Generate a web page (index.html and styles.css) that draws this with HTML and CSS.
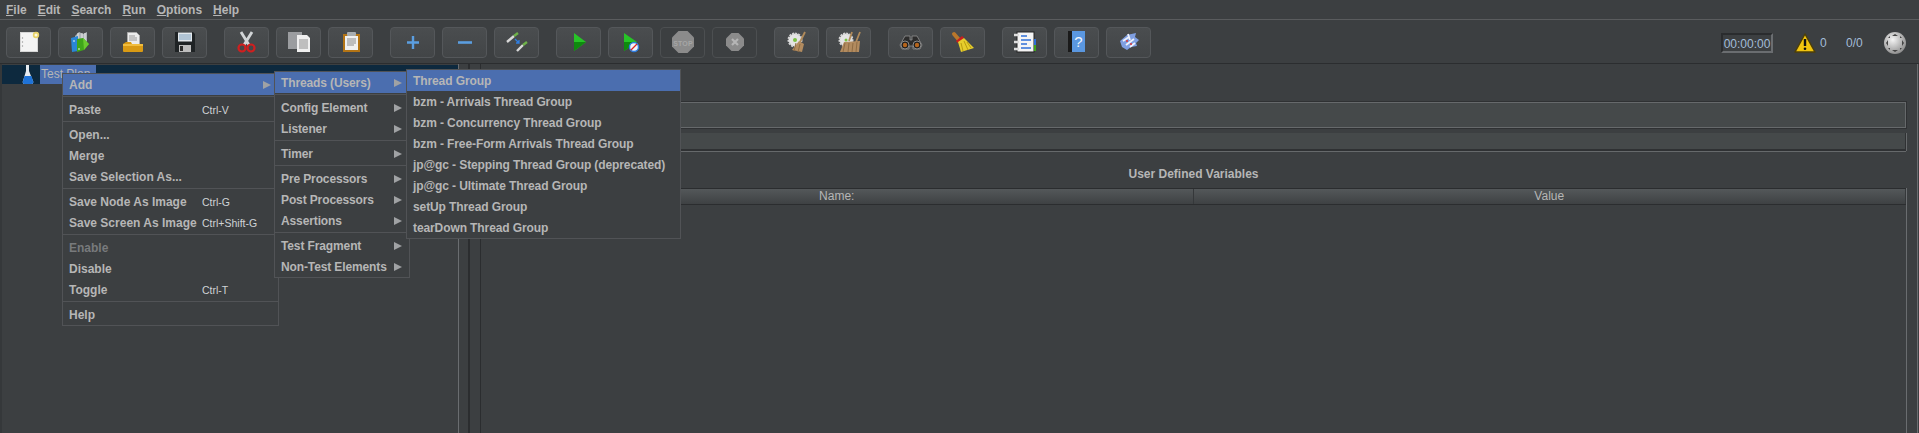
FILE: index.html
```html
<!DOCTYPE html>
<html lang="en">
<head>
<meta charset="utf-8">
<title>Apache JMeter</title>
<link rel="stylesheet" href="styles.css">
</head>
<body>
<div class="app">
  <nav class="menubar">
    <span class="mb-item"><u>F</u>ile</span>
    <span class="mb-item"><u>E</u>dit</span>
    <span class="mb-item"><u>S</u>earch</span>
    <span class="mb-item"><u>R</u>un</span>
    <span class="mb-item"><u>O</u>ptions</span>
    <span class="mb-item"><u>H</u>elp</span>
  </nav>

  <div class="toolbar">
    <div class="tool-group">
      <button class="tool"><svg viewBox="1 1 43 29"><rect x="14.5" y="5.5" width="17" height="19" fill="#f4f4f4" stroke="#d6d6d6"/><circle cx="16.5" cy="11" r=".7" fill="#999"/><circle cx="16.5" cy="15" r=".7" fill="#999"/><circle cx="16.5" cy="19" r=".7" fill="#999"/><circle cx="30" cy="8" r="3.2" fill="#e8d36a"/><circle cx="30" cy="8" r="1.500" fill="#fffbe0"/></svg></button>
      <button class="tool"><svg viewBox="1 1 43 29"><path d="M17 9l4-4 4 2 4-2v10H17z" fill="#aeb4b9"/><path d="M20 6v8M24 6v8M27 6v8" stroke="#e8e8e8"/><path d="M13 11l7-2v15l-6 1z" fill="#2a86d6"/><path d="M19 12l6-1 6 6-5 6-7 2z" fill="#3fa51a"/><path d="M25 11l6 6-5 6z" fill="#69c92f"/><circle cx="16" cy="14" r=".8" fill="#fff"/><circle cx="21" cy="22" r=".8" fill="#fff"/></svg></button>
      <button class="tool"><svg viewBox="1 1 43 29"><path d="M17.5 5.5h9l3 3v9h-12z" fill="#ececec" stroke="#aaa"/><path d="M19 9h6M19 11h8M19 13h8" stroke="#999"/><path d="M13 17l3-2h5l1 2h11v7a1 1 0 0 1-1 1H14a1 1 0 0 1-1-1z" fill="#d99a14"/><path d="M13 17h20v2H13z" fill="#f1bd3e"/></svg></button>
      <button class="tool"><svg viewBox="1 1 43 29"><path d="M13 5h18l2 2v18H13z" fill="#1f2325"/><rect x="16" y="5.500" width="14" height="9" fill="#e3e8ec"/><path d="M17 8h12M17 10h12M17 12h12" stroke="#7fa0bd"/><rect x="17" y="18" width="12" height="7" fill="#bdbdbd"/><rect x="18" y="19" width="3" height="5" fill="#2b2b2b"/></svg></button>
    </div>
    <div class="tool-group">
      <button class="tool"><svg viewBox="1 1 43 29"><path d="M17 5l8 13M28 5l-8 13" stroke="#d2d5d7" stroke-width="2.800" fill="none"/><circle cx="18" cy="21" r="3.500" fill="none" stroke="#cf1f1f" stroke-width="2.200"/><circle cx="27" cy="21" r="3.500" fill="none" stroke="#cf1f1f" stroke-width="2.200"/></svg></button>
      <button class="tool"><svg viewBox="1 1 43 29"><rect x="12" y="5" width="14" height="17" fill="#9b9da0"/><path d="M21 8h10l3 3v14H21z" fill="#efefef"/><path d="M23 13h9M23 15h9M23 17h9M23 19h9M23 21h9" stroke="#8d8d8d"/></svg></button>
      <button class="tool"><svg viewBox="1 1 43 29"><rect x="15" y="7" width="17" height="18" fill="#b37415"/><rect x="17" y="9" width="13" height="14" fill="#f0f0f0"/><rect x="19" y="5" width="9" height="4" rx="1" fill="#a8adb0"/><path d="M19 12h9M19 14h9M19 16h9M19 18h7" stroke="#8a8a8a"/></svg></button>
    </div>
    <div class="tool-group">
      <button class="tool"><svg viewBox="1 1 43 29"><path d="M23 9v13M17 15.500h12" stroke="#5b9ee0" stroke-width="2.400" fill="none"/></svg></button>
      <button class="tool"><svg viewBox="1 1 43 29"><path d="M16 15.500h14" stroke="#5b9ee0" stroke-width="2.600" fill="none"/></svg></button>
      <button class="tool"><svg viewBox="1 1 43 29"><path d="M13 15l7-6" stroke="#d8d8d8" stroke-width="2.400"/><path d="M20 9l4-3" stroke="#6fb24a" stroke-width="2.400"/><path d="M23 24l6-6" stroke="#d8d8d8" stroke-width="2.400"/><path d="M29 18l4-3" stroke="#6fb24a" stroke-width="2.400"/><path d="M21 12l4 4m0-3v3h-3" stroke="#2f7de0" stroke-width="1.300" fill="none"/></svg></button>
    </div>
    <div class="tool-group">
      <button class="tool"><svg viewBox="1 1 43 29"><path d="M18 6l12 9-12 9z" fill="#27c427"/><path d="M18 15h12l-12 9z" fill="#0e8a0e"/></svg></button>
      <button class="tool"><svg viewBox="1 1 43 29"><path d="M16 6l13 9-13 9z" fill="#27c427"/><path d="M16 15h13l-13 9z" fill="#0e8a0e"/><circle cx="26" cy="20" r="4.500" fill="#f0f4fa" stroke="#2f7de0" stroke-width="1.400"/><path d="M23 23l6-6" stroke="#d22" stroke-width="1.300"/></svg></button>
      <button class="tool off"><svg viewBox="1 1 43 29"><path d="M18.500 4h9l6.500 6.500v9L27.500 26h-9L12 19.500v-9z" fill="#8b8b8b"/><text class="stop" x="23" y="18.500">STOP</text></svg></button>
      <button class="tool off"><svg viewBox="1 1 43 29"><path d="M19.500 6h7L32 11.500v7L26.500 24h-7L14 18.500v-7z" fill="#8b8b8b"/><path d="M20 12l6 6M26 12l-6 6" stroke="#b5b5b5" stroke-width="2.200"/></svg></button>
    </div>
    <div class="tool-group">
      <button class="tool"><svg viewBox="1 1 43 29"><circle cx="21" cy="13" r="6.500" fill="#e4e4e4" stroke="#d4d4d4" stroke-width="2" stroke-dasharray="2 1"/><circle cx="21" cy="13" r="2" fill="#7ac143"/><path d="M31 5l-5 10" stroke="#b08a5a" stroke-width="1.800"/><path d="M25 14l5 3-2 8-10-2z" fill="#b28b5f"/><path d="M22 16l-2 8M26 17l-2 8" stroke="#8f6c44"/></svg></button>
      <button class="tool"><svg viewBox="1 1 43 29"><circle cx="20" cy="13" r="6.500" fill="#e4e4e4" stroke="#d4d4d4" stroke-width="2" stroke-dasharray="2 1"/><circle cx="20" cy="13" r="1.500" fill="#7ac143"/><path d="M26 5l-3 9M34 5l-4 10" stroke="#b08a5a" stroke-width="1.800"/><path d="M18 15l16-1-1 11H14z" fill="#b28b5f"/><path d="M19 16l-2 9M23 16l-1 9M27 16l-1 9M31 15l-1 10" stroke="#8f6c44"/></svg></button>
    </div>
    <div class="tool-group">
      <button class="tool"><svg viewBox="1 1 43 29"><path d="M17 9h5v4h2V9h5l5 9-2 4H25v-3h-4v3H14l-2-4z" fill="#2c2c2c" stroke="#8f8f8f" stroke-width=".8"/><circle cx="17" cy="18" r="4" fill="#1f1f1f" stroke="#8a8a8a"/><circle cx="29" cy="18" r="4" fill="#1f1f1f" stroke="#8a8a8a"/><circle cx="17" cy="18" r="2.200" fill="#b5651d"/><circle cx="29" cy="18" r="2.200" fill="#b5651d"/></svg></button>
      <button class="tool"><svg viewBox="1 1 43 29"><path d="M14 7l6 7" stroke="#b9772b" stroke-width="4" stroke-linecap="round"/><path d="M17 14l5-4 1 1-5 4z" fill="#c81e1e" stroke="#c81e1e" stroke-width="1.500"/><path d="M18 15l6-4 10 10-13 4z" fill="#e6cd2c"/><path d="M21 16l2 8M24 14l4 9M27 15l4 6" stroke="#b89b10"/></svg></button>
    </div>
    <div class="tool-group">
      <button class="tool"><svg viewBox="1 1 43 29"><rect x="15" y="5" width="17" height="20" fill="#f4f4f4" stroke="#222"/><path d="M19 9h6M19 13h10M19 17h6M19 21h10" stroke="#2f6fd6" stroke-width="1.400"/><rect x="32" y="12" width="2" height="6" fill="#2f6fd6"/><rect x="32" y="18" width="2" height="6" fill="#3fa51a"/><path d="M12 8h5M12 15h5M12 22h5" stroke="#ddd" stroke-width="2.500"/></svg></button>
      <button class="tool"><svg viewBox="1 1 43 29"><rect x="14" y="4" width="17" height="21" fill="#5a97e0"/><rect x="14" y="4" width="4" height="21" fill="#1a1a1a"/><text class="qmark" x="24.500" y="20">?</text></svg></button>
      <button class="tool"><svg viewBox="1 1 43 29"><path d="M14 14l7-6 9-2-1 4 4 3-3 3 1 3-6 1-4 3-5-3z" fill="#7f9fe2"/><path d="M17 14l6-4M20 18l8-6M24 20l5-4M22 7l2 6" stroke="#eef2fc" stroke-width="1.800"/><circle cx="21" cy="14" r="1" fill="#d33"/><circle cx="25" cy="17" r="1" fill="#d33"/></svg></button>
    </div>
    <div class="status">
      <div class="timer">00:00:00</div>
      <svg class="warn" viewBox="0 0 22 20"><path d="M11 1l10 18H1z" fill="#f1c40f" stroke="#4d3f08" stroke-width="1.500" stroke-linejoin="round"/><path d="M11 6v7" stroke="#111" stroke-width="2.400"/><circle cx="11" cy="15.800" r="1.300" fill="#111"/></svg>
      <span class="count first">0</span>
      <span class="count ratio">0/0</span>
      <svg class="globe" viewBox="0 0 22 22"><defs><radialGradient id="g" cx=".4" cy=".35" r=".7"><stop offset="0" stop-color="#f4f4f4"/><stop offset="1" stop-color="#8a8a8a"/></radialGradient></defs><circle cx="11" cy="11" r="11" fill="url(#g)"/><path d="M8 4h6l-3-2zM8 18h6l-3 2zM4 8v6l-2-3zM18 8v6l2-3z" fill="#444"/><path d="M6 6l-2 0 2-2zM16 6h2l-2-2zM6 16H4l2 2zM16 16h2l-2 2z" fill="#444"/></svg>
    </div>
  </div>

  <main class="workspace">
    <aside class="tree">
      <div class="tree-row">
        <svg class="flask" viewBox="0 0 12 19"><path d="M4 0h3v6l4 10a2 2 0 0 1-2 3H3a2 2 0 0 1-2-3l3-10z" fill="#e6ebf1"/><path d="M2.500 11h7l1.500 5a2 2 0 0 1-2 3H3a2 2 0 0 1-2-3z" fill="#1f73d8"/></svg>
        <span class="tree-label">Test Plan</span>
      </div>
    </aside>
    <div class="splitter"></div>
    <section class="detail">
      <div class="field field-one"></div>
      <div class="field field-two"></div>
      <h2 class="vars-title">User Defined Variables</h2>
      <div class="vars-table">
        <div class="vars-head">
          <div class="vars-col">Name:</div>
          <div class="vars-col">Value</div>
        </div>
      </div>
    </section>
  </main>

  <div class="menu menu-main">
    <div class="row hot"><span class="label">Add</span><i class="arrow"></i></div>
    <div class="sep"></div>
    <div class="row"><span class="label">Paste</span><span class="key">Ctrl-V</span></div>
    <div class="sep"></div>
    <div class="row"><span class="label">Open...</span></div>
    <div class="row"><span class="label">Merge</span></div>
    <div class="row"><span class="label">Save Selection As...</span></div>
    <div class="sep"></div>
    <div class="row"><span class="label">Save Node As Image</span><span class="key">Ctrl-G</span></div>
    <div class="row"><span class="label">Save Screen As Image</span><span class="key">Ctrl+Shift-G</span></div>
    <div class="sep"></div>
    <div class="row dim"><span class="label">Enable</span></div>
    <div class="row"><span class="label">Disable</span></div>
    <div class="row"><span class="label">Toggle</span><span class="key">Ctrl-T</span></div>
    <div class="sep"></div>
    <div class="row"><span class="label">Help</span></div>
  </div>

  <div class="menu menu-add">
    <div class="row hot"><span>Threads (Users)</span><i class="arrow"></i></div>
    <div class="sep"></div>
    <div class="row"><span>Config Element</span><i class="arrow"></i></div>
    <div class="row"><span>Listener</span><i class="arrow"></i></div>
    <div class="sep"></div>
    <div class="row"><span>Timer</span><i class="arrow"></i></div>
    <div class="sep"></div>
    <div class="row"><span>Pre Processors</span><i class="arrow"></i></div>
    <div class="row"><span>Post Processors</span><i class="arrow"></i></div>
    <div class="row"><span>Assertions</span><i class="arrow"></i></div>
    <div class="sep"></div>
    <div class="row"><span>Test Fragment</span><i class="arrow"></i></div>
    <div class="row"><span>Non-Test Elements</span><i class="arrow"></i></div>
  </div>

  <div class="menu menu-threads">
    <div class="row hot"><span>Thread Group</span></div>
    <div class="row"><span>bzm - Arrivals Thread Group</span></div>
    <div class="row"><span>bzm - Concurrency Thread Group</span></div>
    <div class="row"><span>bzm - Free-Form Arrivals Thread Group</span></div>
    <div class="row"><span>jp@gc - Stepping Thread Group (deprecated)</span></div>
    <div class="row"><span>jp@gc - Ultimate Thread Group</span></div>
    <div class="row"><span>setUp Thread Group</span></div>
    <div class="row"><span>tearDown Thread Group</span></div>
  </div>
</div>
</body>
</html>
```
FILE: styles.css
```css
* { box-sizing: border-box; }
html, body { margin: 0; padding: 0; background: #3c3f41; }
body { font: bold 12px "Liberation Sans", Arial, sans-serif; color: #b6b6b6; overflow: hidden; }
.app { position: relative; width: 1919px; height: 433px; display: flex; flex-direction: column; overflow: hidden; background: #3c3f41; }

.menubar { height: 19px; display: flex; align-items: center; padding-left: 6px; gap: 11px; }
.mb-item { line-height: 18px; }
.mb-item u { text-underline-offset: 1px; }

.toolbar { height: 45px; display: flex; align-items: flex-start; gap: 17px; padding: 7px 13px 0 6px; border-top: 1px solid #5a5c5e; border-bottom: 1px solid #2b2d2f; flex: none; }
.tool-group { display: flex; gap: 7px; }
.tool { width: 45px; height: 31px; padding: 0; background: linear-gradient(#4a4d4f, #424547); border: 1px solid #54575a; border-radius: 4px; display: block; }
.tool.off { background: #3c3f41; border-color: #4c4f51; }
.tool svg { display: block; width: 43px; height: 29px; }
.stop { font: bold 7px "Liberation Sans", sans-serif; fill: #a6a6a6; text-anchor: middle; letter-spacing: .2px; }
.qmark { font: 15px "Liberation Sans", sans-serif; fill: #f0f5fb; text-anchor: middle; }

.status { margin-left: auto; display: flex; align-items: center; height: 21px; margin-top: 5px; font-weight: normal; color: #a3bdd8; }
.timer { width: 52px; height: 20px; line-height: 18px; text-align: center; border: 2px solid; border-color: #2a2c2e #6a6d70 #6a6d70 #2a2c2e; background: #3c3f41; }
.warn { width: 22px; height: 20px; margin-left: 21px; }
.count.first { margin-left: 4px; width: 7px; }
.count.ratio { margin-left: 19px; width: 17px; }
.globe { width: 22px; height: 22px; margin-left: 21px; }

.workspace { flex: 1; display: flex; min-height: 0; }
.tree { width: 459px; border-right: 1px solid #6a6d70; border-left: 2px solid #35383a; padding-top: 1px; flex: none; }
.tree-row { height: 19px; background: #0d293e; display: flex; align-items: center; }
.flask { width: 12px; height: 19px; margin-left: 20px; }
.tree-label { margin-left: 6px; width: 56px; height: 19px; line-height: 19px; padding-left: 1px; background: #4b6eaf; font-weight: normal; white-space: nowrap; overflow: hidden; }
.splitter { width: 11px; border-right: 2px solid #2b2d2f; flex: none; }
.detail { flex: 1; display: flex; flex-direction: column; margin-left: 10px; margin-right: 1px; border-left: 1px solid #2b2d2f; border-right: 1px solid #6a6d70; padding: 37px 11px 0 0; }
.field { background: #45494a; }
.field-one { height: 26px; border: 1px solid #66696b; outline: 1px solid #2f3133; border-left: 0; margin-top: 1px; }
.field-two { height: 18px; margin-top: 5px; border-bottom: 2px solid #2f3133; border-right: 1px solid #2f3133; box-shadow: 0 1px 0 #66696b, 1px 0 0 #66696b; }
.vars-title { margin: 0; height: 37px; padding-top: 14px; line-height: 18px; font-size: 12px; font-weight: bold; text-align: center; }
.vars-table { flex: 1; border-right: 1px solid #6a6d70; margin-right: -1px; }
.vars-head { height: 17px; display: flex; border-top: 1px solid #2b2d2f; border-bottom: 1px solid #2b2d2f; background: linear-gradient(#54585a, #3e4143); }
.vars-col { flex: 1; line-height: 15px; text-align: center; font-weight: normal; border-right: 1px solid #35383a; }

.menu { position: absolute; background: #3c3f41; border: 1px solid #515356; }
.menu-main { left: 62px; top: 73px; width: 217px; }
.menu-add { left: 274px; top: 71px; width: 136px; letter-spacing: -.12px; }
.menu-threads { left: 406px; top: 69px; width: 275px; letter-spacing: -.1px; }
.row { height: 21px; display: flex; align-items: center; padding: 0 7px 0 6px; white-space: nowrap; }
.row.hot { background: #4b6eaf; }
.row.dim { color: #787a7c; }
.label { flex: 0 0 133px; }
.key { font-weight: normal; font-size: 10.5px; color: #cfd3d6; }
.sep { height: 4px; padding-top: 1px; }
.sep::before { content: ""; display: block; height: 1px; background: #515356; }
.arrow { margin-left: auto; width: 0; height: 0; border-left: 8px solid #a0a2a4; border-top: 4.5px solid transparent; border-bottom: 4.5px solid transparent; }
```
